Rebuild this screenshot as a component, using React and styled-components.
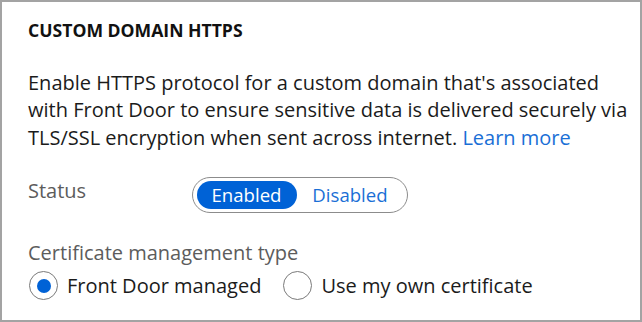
import React, { useState } from "react";
import styled, { createGlobalStyle } from "styled-components";

const GlobalStyle = createGlobalStyle`
  html, body {
    margin: 0;
    padding: 0;
    background: #ffffff;
  }
  * {
    box-sizing: border-box;
  }
`;

const Frame = styled.section`
  width: 642px;
  height: 322px;
  border: 2px solid #a3a3a3;
  background: #ffffff;
  padding: 17px 0 0 26px;
  font-family: "Open Sans", "Noto Sans", sans-serif;
  color: #1b1b1b;
  overflow: hidden;
`;

const Title = styled.h2`
  margin: 0;
  font-size: 17.6px;
  font-weight: 700;
  line-height: 22px;
  color: #111111;
`;

const Description = styled.p`
  margin: 27.5px 0 0;
  font-size: 20px;
  line-height: 27.5px;
  white-space: nowrap;
`;

const Link = styled.a`
  color: #1a6fd6;
  text-decoration: none;
`;

const Row = styled.div`
  display: flex;
  align-items: flex-start;
  margin-top: 26px;
`;

const Label = styled.div`
  width: 164px;
  font-size: 20px;
  line-height: 24px;
  color: #5c5c5c;
  padding-top: 2px;
`;

const Toggle = styled.div`
  display: flex;
  width: 216px;
  height: 36px;
  padding: 2.5px 3.5px;
  border: 1.5px solid #8c8c8c;
  border-radius: 18px;
`;

const ToggleOption = styled.button`
  border: none;
  border-radius: 14px;
  height: 28px;
  width: ${(p) => (p.$active ? 100 : 107)}px;
  padding: 0;
  background: ${(p) => (p.$active ? "#0062d6" : "transparent")};
  color: ${(p) => (p.$active ? "#ffffff" : "#1a6fd6")};
  font-family: inherit;
  font-size: 18.6px;
  line-height: 28px;
  cursor: pointer;
`;

const FieldLabel = styled.div`
  margin-top: 28px;
  font-size: 20px;
  line-height: 24px;
  color: #5c5c5c;
`;

const RadioGroup = styled.div`
  display: flex;
  gap: 22px;
  margin: 6px 0 0 1px;
`;

const RadioOption = styled.label`
  display: flex;
  align-items: center;
  gap: 9px;
  font-size: 20px;
  line-height: 28px;
  color: #1b1b1b;
  cursor: pointer;
`;

const RadioCircle = styled.span`
  width: 29px;
  height: 29px;
  border-radius: 50%;
  border: 1.5px solid #7a7a7a;
  display: flex;
  align-items: center;
  justify-content: center;

  &::after {
    content: "";
    width: 14px;
    height: 14px;
    border-radius: 50%;
    background: ${(p) => (p.$checked ? "#0062d6" : "transparent")};
  }
`;

export default function App() {
  const [enabled, setEnabled] = useState(true);
  const [cert, setCert] = useState("managed");

  return (
    <>
      <GlobalStyle />
      <Frame>
        <Title>CUSTOM DOMAIN HTTPS</Title>
        <Description>
          Enable HTTPS protocol for a custom domain that's associated
          <br />
          with Front Door to ensure sensitive data is delivered securely via
          <br />
          TLS/SSL encryption when sent across internet. <Link href="#">Learn more</Link>
        </Description>
        <Row>
          <Label>Status</Label>
          <Toggle>
            <ToggleOption $active={enabled} onClick={() => setEnabled(true)}>
              Enabled
            </ToggleOption>
            <ToggleOption $active={!enabled} onClick={() => setEnabled(false)}>
              Disabled
            </ToggleOption>
          </Toggle>
        </Row>
        <FieldLabel>Certificate management type</FieldLabel>
        <RadioGroup>
          <RadioOption onClick={() => setCert("managed")}>
            <RadioCircle $checked={cert === "managed"} />
            Front Door managed
          </RadioOption>
          <RadioOption onClick={() => setCert("own")}>
            <RadioCircle $checked={cert === "own"} />
            Use my own certificate
          </RadioOption>
        </RadioGroup>
      </Frame>
    </>
  );
}
